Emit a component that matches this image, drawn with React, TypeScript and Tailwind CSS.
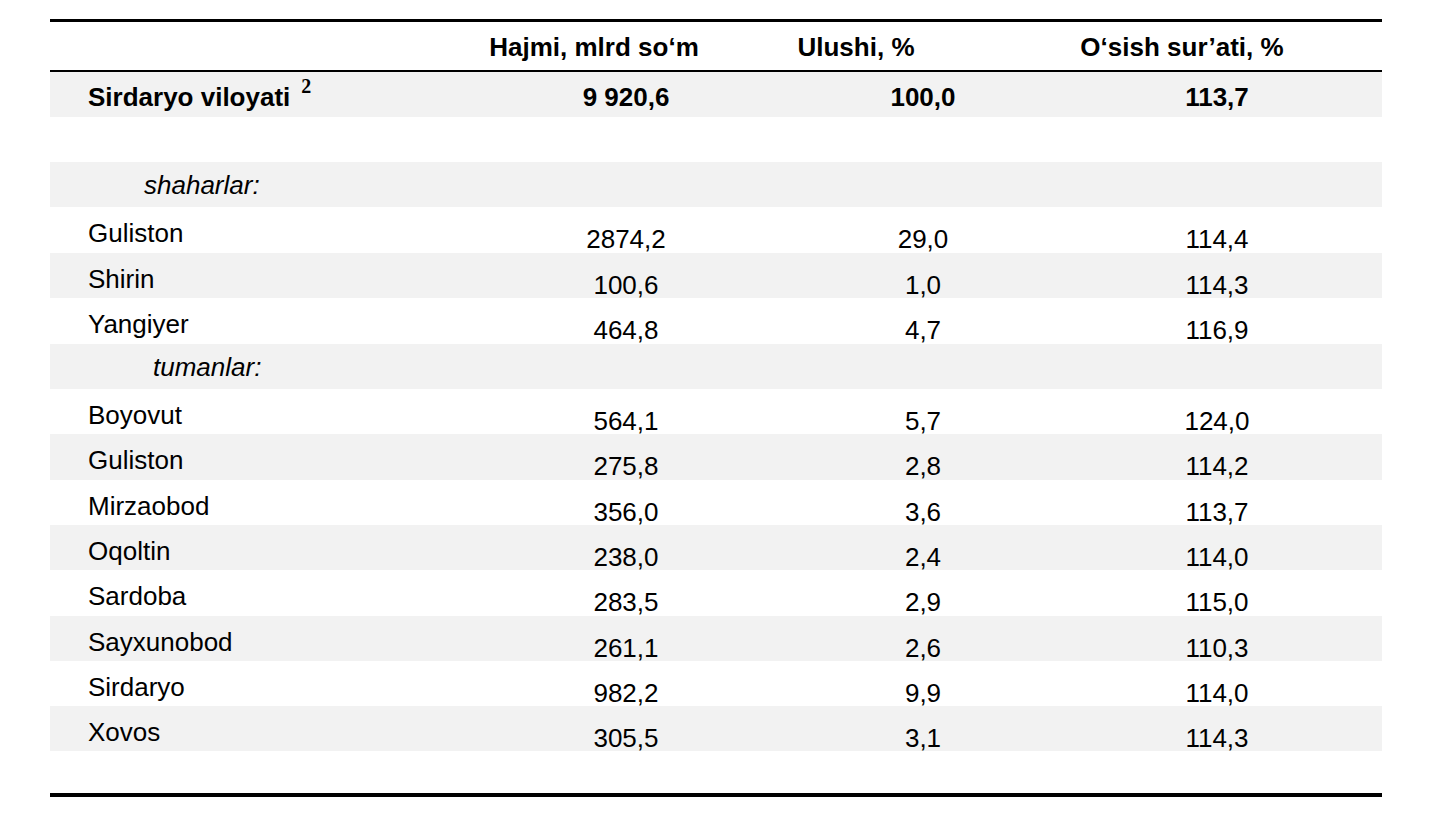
import React from 'react'

type Row =
  | { kind: 'total'; label: string; vol: string; share: string; growth: string; h: string }
  | { kind: 'blank'; h: string }
  | { kind: 'section'; label: string; indent: string; h: string }
  | { kind: 'item'; label: string; vol: string; share: string; growth: string; h: string }

const rows: Row[] = [
  { kind: 'total', label: 'Sirdaryo viloyati', vol: '9 920,6', share: '100,0', growth: '113,7', h: 'h-[45px]' },
  { kind: 'blank', h: 'h-[45px]' },
  { kind: 'section', label: 'shaharlar:', indent: 'pl-[94px]', h: 'h-[45px]' },
  { kind: 'item', label: 'Guliston', vol: '2874,2', share: '29,0', growth: '114,4', h: 'h-[46px]' },
  { kind: 'item', label: 'Shirin', vol: '100,6', share: '1,0', growth: '114,3', h: 'h-[45px]' },
  { kind: 'item', label: 'Yangiyer', vol: '464,8', share: '4,7', growth: '116,9', h: 'h-[46px]' },
  { kind: 'section', label: 'tumanlar:', indent: 'pl-[103px]', h: 'h-[45px]' },
  { kind: 'item', label: 'Boyovut', vol: '564,1', share: '5,7', growth: '124,0', h: 'h-[45px]' },
  { kind: 'item', label: 'Guliston', vol: '275,8', share: '2,8', growth: '114,2', h: 'h-[46px]' },
  { kind: 'item', label: 'Mirzaobod', vol: '356,0', share: '3,6', growth: '113,7', h: 'h-[45px]' },
  { kind: 'item', label: 'Oqoltin', vol: '238,0', share: '2,4', growth: '114,0', h: 'h-[45px]' },
  { kind: 'item', label: 'Sardoba', vol: '283,5', share: '2,9', growth: '115,0', h: 'h-[46px]' },
  { kind: 'item', label: 'Sayxunobod', vol: '261,1', share: '2,6', growth: '110,3', h: 'h-[45px]' },
  { kind: 'item', label: 'Sirdaryo', vol: '982,2', share: '9,9', growth: '114,0', h: 'h-[45px]' },
  { kind: 'item', label: 'Xovos', vol: '305,5', share: '3,1', growth: '114,3', h: 'h-[45px]' },
]

const dataCols = 'grid grid-cols-[430px_292px_302px_286px_1fr]'

export default function App() {
  return (
    <div className="min-h-[826px] w-full bg-white text-black font-['Liberation_Sans',Arial,sans-serif] text-[26px] leading-[26px]">
      <div className="ml-[50px] w-[1332px] pt-[19px]">
        {/* top rule */}
        <div className="h-[3px] bg-black" />

        {/* column headings */}
        <div className="grid h-[48px] grid-cols-[430px_228px_296px_356px_1fr] pt-[12px] font-bold">
          <div />
          <div className="text-center whitespace-nowrap">Hajmi, mlrd so‘m</div>
          <div className="text-center whitespace-nowrap">Ulushi, %</div>
          <div className="text-center whitespace-nowrap">O‘sish sur’ati, %</div>
          <div />
        </div>
        <div className="h-[2px] bg-black" />

        {/* body */}
        {rows.map((r, i) => {
          const bg = i % 2 === 0 ? 'bg-[#f2f2f2]' : 'bg-white'
          if (r.kind === 'blank') return <div key={i} className={`${r.h} ${bg}`} />
          if (r.kind === 'section')
            return (
              <div key={i} className={`${r.h} ${bg} ${r.indent} pt-[10px] italic`}>
                {r.label}
              </div>
            )
          if (r.kind === 'total')
            return (
              <div key={i} className={`${dataCols} ${r.h} ${bg} pt-[12px] font-bold`}>
                <div className="pl-[38px] whitespace-nowrap">
                  {r.label}
                  <span className="relative -top-[8px] ml-[11px] inline-block align-top font-['Liberation_Serif',serif] text-[20px] font-bold leading-[20px]">
                    2
                  </span>
                </div>
                <div className="text-center">{r.vol}</div>
                <div className="text-center">{r.share}</div>
                <div className="text-center">{r.growth}</div>
                <div />
              </div>
            )
          return (
            <div key={i} className={`${dataCols} ${r.h} ${bg}`}>
              <div className="pl-[38px] pt-[13px]">{r.label}</div>
              <div className="pt-[19px] text-center">{r.vol}</div>
              <div className="pt-[19px] text-center">{r.share}</div>
              <div className="pt-[19px] text-center">{r.growth}</div>
              <div />
            </div>
          )
        })}

        <div className="h-[42px]" />
        {/* bottom rule */}
        <div className="h-[4px] bg-black" />
      </div>
    </div>
  )
}
